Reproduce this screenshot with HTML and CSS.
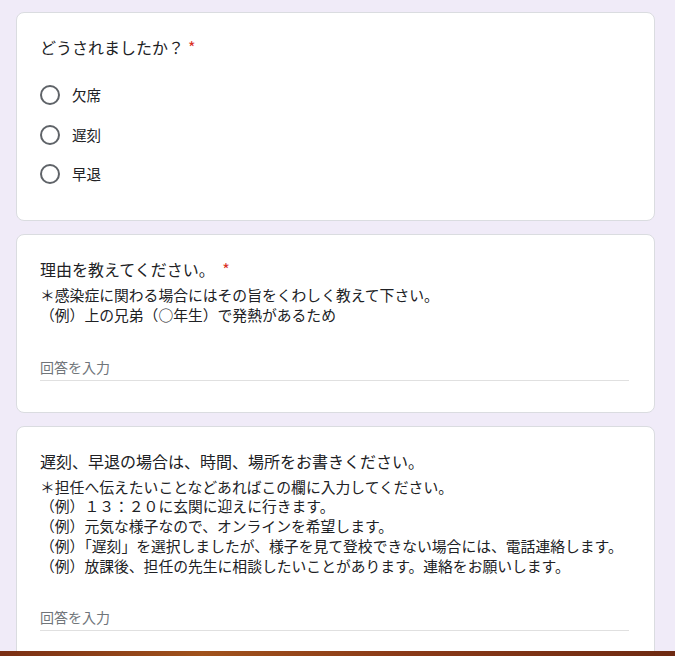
FILE: index.html
```html
<!DOCTYPE html>
<html lang="ja">
  <head>
    <meta charset="utf-8" />
    <title>フォーム</title>
    <link rel="stylesheet" href="styles.css">
  </head>
  <body>
    <div class="form">
      <div class="card">
        <div class="question-title">どうされましたか？<span class="required">*</span></div>
        <div class="radio-list">
          <label class="radio-item"><span class="radio"></span><span>欠席</span></label>
          <label class="radio-item"><span class="radio"></span><span>遅刻</span></label>
          <label class="radio-item"><span class="radio"></span><span>早退</span></label>
        </div>
      </div>

      <div class="card">
        <div class="question-title">理由を教えてください。 <span class="required">*</span></div>
        <div class="description">
          ＊感染症に関わる場合にはその旨をくわしく教えて下さい。<br>
          （例）上の兄弟（○年生）で発熱があるため
        </div>
        <div class="answer">回答を入力</div>
      </div>

      <div class="card">
        <div class="question-title">遅刻、早退の場合は、時間、場所をお書きください。</div>
        <div class="description">
          ＊担任へ伝えたいことなどあればこの欄に入力してください。<br>
          （例）１３：２０に玄関に迎えに行きます。<br>
          （例）元気な様子なので、オンラインを希望します。<br>
          （例）「遅刻」を選択しましたが、様子を見て登校できない場合には、電話連絡します。<br>
          （例）放課後、担任の先生に相談したいことがあります。連絡をお願いします。
        </div>
        <div class="answer">回答を入力</div>
      </div>
    </div>
    <div class="dock-edge"></div>
  </body>
</html>
```

FILE: styles.css
```css
body {
  margin: 0;
  background-color: #f0ebf8;
  font-family: "Noto Sans CJK JP", "Noto Sans", sans-serif;
  color: #202124;
  overflow: hidden;
}

.form {
  display: flex;
  flex-direction: column;
  gap: 13px;
  padding: 12px 20px 0 16px;
}

.card {
  background-color: #fff;
  border: 1px solid #dadce0;
  border-radius: 8px;
  padding: 22px 24px 22px 23px;
}

.question-title {
  font-size: 16px;
  line-height: 24px;
}

.required {
  color: #d93025;
  margin-left: 4px;
}

.radio-list {
  display: flex;
  flex-direction: column;
  gap: 19.5px;
  margin-top: 26px;
  padding-bottom: 14px;
}

.radio-item {
  display: flex;
  align-items: center;
  gap: 12px;
  font-size: 14.5px;
  line-height: 20px;
}

.radio {
  width: 16px;
  height: 16px;
  border: 2px solid #5f6368;
  border-radius: 50%;
}

.description {
  font-size: 14.8px;
  line-height: 19.75px;
  margin-top: 4px;
}

.answer {
  margin-top: 32px;
  margin-right: 1px;
  font-size: 14px;
  line-height: 20px;
  color: #70757a;
  padding-bottom: 3px;
  border-bottom: 1px solid #e0e0e0;
  margin-bottom: 9px;
}

.card:last-child {
  padding-bottom: 60px;
}

.dock-edge {
  position: fixed;
  left: 0;
  right: 0;
  bottom: 0;
  height: 5px;
  background: linear-gradient(90deg, #7a2f14, #a0521c 30%, #8a3a18 60%, #6e2a12);
}
```
